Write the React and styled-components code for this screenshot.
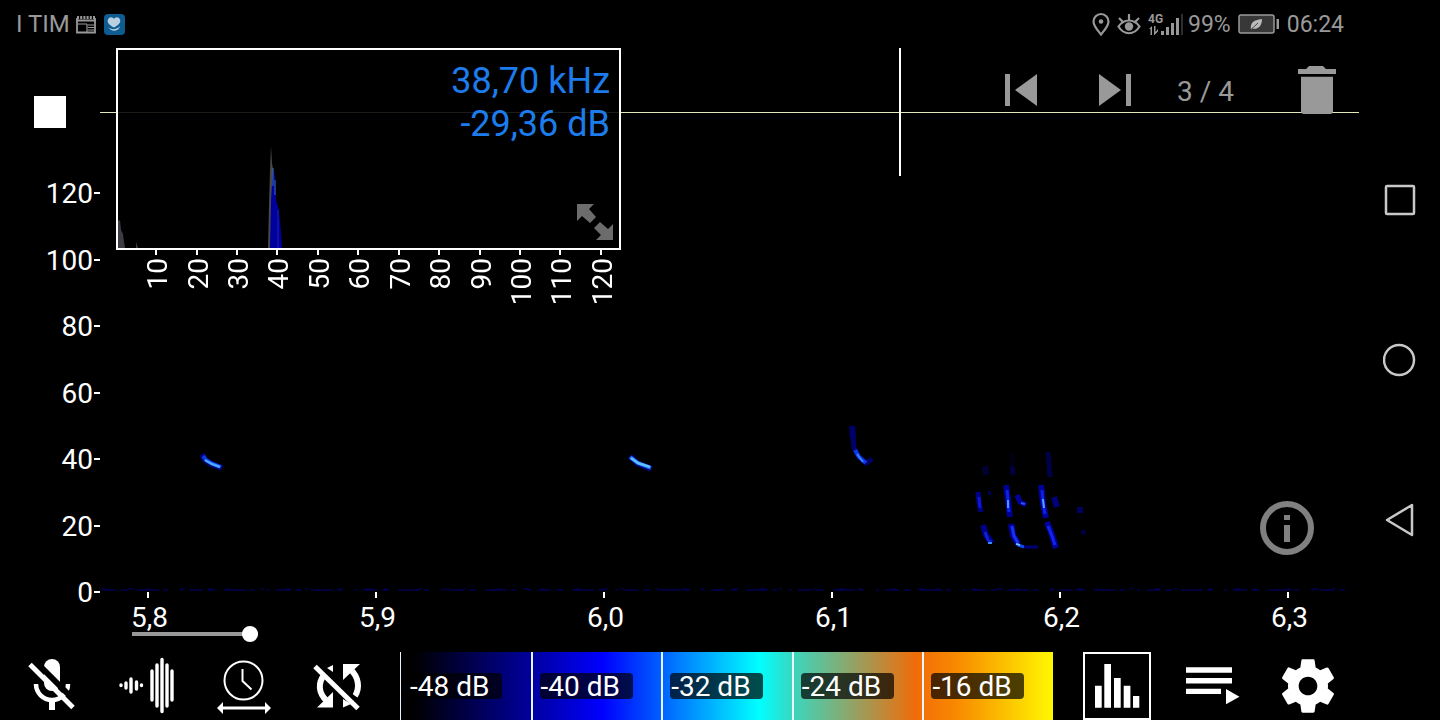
import { useState } from 'react'
import styled, { createGlobalStyle } from 'styled-components'

const frequencies = [120, 100, 80, 60, 40, 20, 0]
const times = ['5,8', '5,9', '6,0', '6,1', '6,2', '6,3']
const spectrumTicks = [10, 20, 30, 40, 50, 60, 70, 80, 90, 100, 110, 120]
const levels = ['-48 dB', '-40 dB', '-32 dB', '-24 dB', '-16 dB']

// every call: path, stroke width, colour
const calls = [
    ['M202 454L205 460L211 464L222 468', 6, '#00006c'],
    ['M203 456L206 460L211 463L221 467', 4, '#0838e0'],
    ['M205 460L212 464L220 467', 2.5, '#48a8ff'],
    ['M630 456L637 463L651 469', 6, '#00006c'],
    ['M630 457L638 463L651 468', 4, '#1060f0'],
    ['M631 458L638 463L650 467', 2.5, '#60c0ff'],
    ['M852 426L853 438', 6, '#00006c'],
    ['M853 438L854 448L859 457L866 463L872 459', 5, '#000068'],
    ['M855 450L859 457L866 463', 4, '#1038e8'],
    ['M857 454L863 462', 2, '#3880ff'],
    ['M978 492L979 502L981 512', 5, '#000088'],
    ['M979 497L980 508', 3, '#0818d0'],
    ['M985 466L986 475', 6, '#000030'],
    ['M988 493L991 493', 4, '#000050'],
    ['M983 525L986 535L992 543', 6, '#000088'],
    ['M985 532L988 540L991 542', 3, '#0820d8'],
    ['M988 543L992 543', 2, '#3888ff'],
    ['M1012 453L1012 466', 3, '#00001c'],
    ['M1012 466L1013 475', 5, '#000040'],
    ['M1006 485L1008 500L1010 517', 6, '#000090'],
    ['M1007 490L1008 500L1009 512', 3, '#0c20e0'],
    ['M1008 500L1008 508', 2, '#4898ff'],
    ['M1017 495L1020 502L1026 505', 5, '#0000a0'],
    ['M1021 503L1025 504', 2, '#2858f0'],
    ['M1011 524L1013 535L1018 544', 6, '#0000a0'],
    ['M1012 526L1014 536L1018 543', 3, '#1430f0'],
    ['M1018 545L1024 547', 3, '#1048f0'],
    ['M1016 544L1020 545', 2, '#78b8ff'],
    ['M1024 547L1038 547', 3, '#000078'],
    ['M1048 452L1049 464L1050 477', 5, '#000048'],
    ['M1041 485L1043 503L1046 518', 6, '#000098'],
    ['M1042 490L1043 503L1045 514', 3, '#0c20e0'],
    ['M1043 499L1044 508', 2, '#58a0ff'],
    ['M1054 497L1057 507', 6, '#000078'],
    ['M1047 522L1052 535L1056 548', 6, '#0000a0'],
    ['M1048 526L1052 536L1055 545', 3, '#1028e8'],
    ['M1080 507L1080 513', 6, '#000060'],
    ['M1083 530L1084 535', 5, '#000038'],
]

const Icon = ({ size = 60, children }) => (
    <svg width={size} height={size} viewBox={`0 0 ${size} ${size}`} fill="currentColor" aria-hidden="true">
        {children}
    </svg>
)

const StatusIcons = () => (
    <StatusGroup $gap={7} $size={23}>
        <svg width="18" height="24" viewBox="0 0 18 24" fill="none" stroke="currentColor" strokeWidth="2.200">
            <path d="M9 22.5C5 17.500 1.500 14 1.500 9.500a7.500 7.500 0 0 1 15 0C16.500 14 13 17.500 9 22.500z" />
            <circle cx="9" cy="9.500" r="2.300" fill="currentColor" stroke="none" />
        </svg>
        <svg width="24" height="24" viewBox="0 0 24 24" fill="none" stroke="currentColor" strokeWidth="2.200">
            <path d="M1.500 14.500C7 6.500 17 6.500 22.500 14.500C17 23.500 7 23.500 1.500 14.500zM12 8V2M5.500 9.500L2 6M18.500 9.500L22 6" />
            <circle cx="12" cy="14.500" r="4.200" fill="currentColor" stroke="none" />
        </svg>
        <StatusGroup $gap={4} $size={23}>
            <svg width="36" height="24" viewBox="0 0 36 24" fill="currentColor">
                <text x="0" y="11" fontSize="12" fontWeight="700">4G</text>
                <path d="M1 17L4 14v9H2.500v-6zM6 14h1.500v6L10 17v2.500L6.500 23H6z" />
                <path d="M13 19h3v4h-3zM18 15h3v8h-3zM23 11h3v12h-3zM28 6h3v17h-3z" />
                <path d="M33 2h2v21h-2z" opacity="0.300" />
            </svg>
            <span>99%</span>
        </StatusGroup>
        <svg width="42" height="22" viewBox="0 0 42 22">
            <rect x="1" y="2" width="35" height="18" rx="2" fill="#383838" stroke="currentColor" strokeWidth="1.500" />
            <path d="M38.500 6h2.500v10h-2.500z" fill="currentColor" />
            <path d="M13 17C12 10 15 7 24 6C24 13 20 17 14 15.500z" fill="#bbb" />
            <path d="M13 16.500L20 10" stroke="#444" />
        </svg>
        <span>06:24</span>
    </StatusGroup>
)

const Spectrogram = () => (
    <Chart viewBox="100 176 1260 416" preserveAspectRatio="none" role="img" aria-label="Spectrogram">
        <defs>
            <filter id="soft" x="-5%" y="-5%" width="110%" height="110%">
                <feGaussianBlur stdDeviation="0.700" />
            </filter>
        </defs>
        <g fill="none" filter="url(#soft)">
            {calls.map(([d, width, color]) => (
                <path key={d + color} d={d} stroke={color} strokeWidth={width} />
            ))}
            <path d="M102 590H1345" stroke="#00003c" strokeWidth="2" strokeDasharray="14 5 7 9 22 4 5 12 3 6" />
            <path d="M102 589H1345" stroke="#00006c" strokeDasharray="4 22 6 13 3 31" />
        </g>
    </Chart>
)

const Spectrum = () => (
    <SpectrumPanel>
        <SpectrumWindow>
            <SpectrumPlot viewBox="0 0 501 198" preserveAspectRatio="none">
                <path d="M0 198V171L2 170L3 180L5 184L6 192L7 198zM18 198V192L20 198z" fill="#3c3c44" />
                <path d="M150 198L151 155L152 120L153 96L154 113L156 125L157 198z" fill="#48484c" />
                <path d="M152 198L153 150L155 118L157 126L158 150L161 160L163 182L164 198z" fill="#00009c" />
                <path d="M155 118V136M157 130V145" stroke="#3474b0" />
                <path d="M160 160V198" stroke="#2020b0" />
            </SpectrumPlot>
            <Readout>
                <span>38,70 kHz</span>
                <span>-29,36 dB</span>
            </Readout>
            <ResizeButton aria-label="Resize spectrum">
                <Icon size={36}>
                    <path d="M0 0h17l-5 5 7 8-6 6-8-7-5 5zM36 36H19l5-5-7-7 6-6 8 7 5-5z" />
                </Icon>
            </ResizeButton>
        </SpectrumWindow>
        <SpectrumAxis>
            {spectrumTicks.map((khz) => (
                <SpectrumTick key={khz}><span>{khz}</span></SpectrumTick>
            ))}
        </SpectrumAxis>
    </SpectrumPanel>
)

const App = () => {
    const [position, setPosition] = useState(100)

    return (
        <Screen>
            <GlobalStyle />
            <Main>
                <StatusBar>
                    <StatusGroup $gap={6} $size={24}>
                        <span>I TIM</span>
                        <svg width="20" height="20" viewBox="0 0 20 20" fill="none" stroke="currentColor">
                            <path d="M1 4V18.500H19V4" strokeWidth="1.800" />
                            <path d="M0 6.500H20" strokeWidth="2" />
                            <path d="M1 3.500H19" strokeWidth="3" strokeDasharray="2 1.200" />
                            <path d="M2 10h9M11 10v8M12 11h6M12 13.500h6M12 16h6" strokeWidth="1.200" />
                        </svg>
                        <AppBadge>
                            <svg width="16" height="16" viewBox="0 0 16 16" fill="#b8d0e0">
                                <path d="M8 11.500C2 8.500 1 6 2 3.500C3.500 0 7 1 8 3C9 1 12.500 0 14 3.500C15 6 13 9 8 11.500z" />
                                <path d="M2 11C5 14 11 14 14 10C13 16 5 16 2 11z" />
                            </svg>
                        </AppBadge>
                    </StatusGroup>
                    <StatusIcons />
                </StatusBar>

                <Workspace>
                    <Gutter>
                        <StopCell>
                            <StopButton aria-label="Stop" />
                        </StopCell>
                        <FrequencyAxis>
                            {frequencies.map((khz) => (
                                <FrequencyLabel key={khz}>{khz}</FrequencyLabel>
                            ))}
                        </FrequencyAxis>
                    </Gutter>

                    <Plot>
                        <Waveform>
                            <Chart viewBox="0 0 1260 128" preserveAspectRatio="none" role="img" aria-label="Waveform">
                                <rect y="64" width="1259" height="1" fill="#e4e8b8" />
                                <rect x="799" width="2" height="128" fill="#fff" />
                            </Chart>
                            <Transport>
                                <PlainButton aria-label="Previous recording">
                                    <Icon size={32}><path d="M0 0h5v32H0zM32 0v32L10 16z" /></Icon>
                                </PlainButton>
                                <PlainButton aria-label="Next recording">
                                    <Icon size={32}><path d="M0 0L22 16L0 32zM27 0h5v32h-5z" /></Icon>
                                </PlainButton>
                                <Counter>3 / 4</Counter>
                                <PlainButton aria-label="Delete recording">
                                    <svg width="38" height="48" viewBox="0 0 38 48" fill="currentColor">
                                        <path d="M0 3h8l3-3h14l3 3h10v5H0zM3 10.700h32V45q0 3-3 3H6q-3 0-3-3z" />
                                    </svg>
                                </PlainButton>
                            </Transport>
                            <Spectrum />
                        </Waveform>

                        <SpectrogramArea>
                            <Spectrogram />
                            <InfoButton aria-label="Info">
                                <Icon size={54}>
                                    <circle cx="27" cy="27" r="24" fill="none" stroke="currentColor" strokeWidth="6" />
                                    <path d="M24 14h6v5h-6zM24 24h6v17h-6z" />
                                </Icon>
                            </InfoButton>
                        </SpectrogramArea>

                        <TimeArea>
                            <TimeAxis>
                                {times.map((time) => (
                                    <TimeLabel key={time}><span>{time}</span></TimeLabel>
                                ))}
                            </TimeAxis>
                            <PositionSlider
                                type="range"
                                aria-label="Position"
                                value={position}
                                onChange={(e) => setPosition(e.target.value)}
                            />
                        </TimeArea>
                    </Plot>
                </Workspace>

                <Toolbar>
                    <ToolButton aria-label="Microphone off">
                        <Icon>
                            <path d="M22 11a8 8 0 0 1 16 0v16a8 8 0 0 1-16 0z" />
                            <path d="M14 28a16 16 0 0 0 32 0" fill="none" stroke="currentColor" strokeWidth="4.500" />
                            <path d="M27 43h6v11h-6z" />
                            <path d="M13 5L55 47" stroke="#000" strokeWidth="6" />
                            <path d="M8 8.500L51 51.500" stroke="currentColor" strokeWidth="5" />
                        </Icon>
                    </ToolButton>
                    <ToolButton aria-label="Time expansion">
                        <Icon>
                            <g stroke="currentColor" strokeWidth="3.400" strokeLinecap="round">
                                <path d="M3 29v.5M8 27v5M13 23v13M18.500 26v7M23.500 29v.5" />
                                <path d="M34 15v29M39 9v41M44 3.500v52M49 9v41M54 15v29" />
                            </g>
                        </Icon>
                    </ToolButton>
                    <ToolButton aria-label="Time scale">
                        <Icon>
                            <g fill="none" stroke="currentColor" strokeWidth="2">
                                <circle cx="29.500" cy="24.500" r="19" />
                                <path d="M28.500 13V25L37.500 33.500" />
                                <path d="M7 52H53" strokeWidth="3" />
                            </g>
                            <path d="M3 52l6-6v12zM57 52l-6-6v12z" />
                        </Icon>
                    </ToolButton>
                    <ToolButton aria-label="Auto scroll off">
                        <Icon>
                            <path d="M14 19C8 27 8 37 17 45M40 13C49 21 50 32 45 40" fill="none" stroke="currentColor" strokeWidth="6" />
                            <path d="M7 51.500H23V36zM33 8H50L33 24zM17 12L23 9V16zM33 43V51.500L41 48z" />
                            <path d="M8 6L53 50" stroke="#000" strokeWidth="3" />
                            <path d="M5 10.500L48 52.500" stroke="currentColor" strokeWidth="5" />
                        </Icon>
                    </ToolButton>

                    <ColorScale>
                        {levels.map((level) => (
                            <ScaleStep key={level}><ScaleLabel>{level}</ScaleLabel></ScaleStep>
                        ))}
                    </ColorScale>

                    <SpectrumToggle aria-label="Show spectrum" aria-pressed="true">
                        <Icon size={48}>
                            <path d="M2 23.700h6.700v22H2zM11.300 2h6.700v43.700h-6.700zM21 16h6.700v29.700H21zM30.700 23.700h6.700v22h-6.700zM40 34h6.300v11.700H40z" />
                        </Icon>
                    </SpectrumToggle>
                    <ToolButton aria-label="Recordings">
                        <Icon>
                            <path d="M4 11.300h46v5.400H4zM4 22h46v5.400H4zM4 32.700h35v5.300H4zM44 33l13.500 7.700L44 48.300z" />
                        </Icon>
                    </ToolButton>
                    <ToolButton aria-label="Settings">
                        <svg width="64" height="64" viewBox="0 0 24 24" fill="currentColor">
                            <path d="M19.430 12.980c.04-.32.07-.64.07-.98s-.03-.66-.07-.98l2.110-1.650c.19-.15.24-.42.12-.64l-2-3.460c-.12-.22-.39-.3-.61-.22l-2.490 1c-.52-.4-1.080-.73-1.690-.98l-.38-2.650C14.460 2.180 14.250 2 14 2h-4c-.25 0-.46.18-.49.42l-.38 2.650c-.61.25-1.170.59-1.690.98l-2.490-1c-.23-.09-.49 0-.61.22l-2 3.460c-.13.22-.07.49.12.64l2.110 1.650c-.04.32-.07.65-.07.98s.03.66.07.98l-2.110 1.650c-.19.15-.24.42-.12.64l2 3.460c.12.22.39.3.61.22l2.490-1c.52.4 1.080.73 1.690.98l.38 2.650c.03.24.24.42.49.42h4c.25 0 .46-.18.49-.42l.38-2.650c.61-.25 1.170-.59 1.690-.98l2.490 1c.23.09.49 0 .61-.22l2-3.460c.12-.22.07-.49-.12-.64l-2.110-1.650zM12 15.500c-1.930 0-3.500-1.570-3.500-3.500s1.570-3.500 3.500-3.500 3.500 1.570 3.500 3.500-1.570 3.500-3.500 3.500z" />
                        </svg>
                    </ToolButton>
                </Toolbar>
            </Main>

            <SystemNav>
                <PlainButton aria-label="Recent apps">
                    <Icon size={34}><rect x="3" y="3" width="28" height="28" rx="1" fill="none" stroke="currentColor" strokeWidth="2.500" /></Icon>
                </PlainButton>
                <PlainButton aria-label="Home">
                    <Icon size={34}><circle cx="16" cy="17" r="15" fill="none" stroke="currentColor" strokeWidth="2.500" /></Icon>
                </PlainButton>
                <PlainButton aria-label="Back">
                    <Icon size={34}><path d="M4 17L29 2V32z" fill="none" stroke="currentColor" strokeWidth="2.500" strokeLinejoin="round" /></Icon>
                </PlainButton>
            </SystemNav>
        </Screen>
    )
}

export default App;

const GlobalStyle = createGlobalStyle`
    * {
        box-sizing: border-box;
    }

    body {
        margin: 0;
        background: #000;
        color: #fff;
        font-family: Roboto, sans-serif;
        font-size: 28px;
    }

    svg {
        display: block;
    }
`

const Screen = styled.div`
    display: grid;
    grid-template-columns: 1fr 80px;
    min-height: 100vh;
`

const Main = styled.main`
    display: flex;
    flex-direction: column;
    min-width: 0;
`

const StatusBar = styled.header`
    display: flex;
    justify-content: space-between;
    align-items: center;
    height: 48px;
    padding: 0 16px;
    color: #999;
`

const StatusGroup = styled.div`
    display: flex;
    align-items: center;
    gap: ${({ $gap }) => $gap}px;
    font-size: ${({ $size }) => $size}px;
`

const AppBadge = styled.span`
    display: grid;
    place-items: center;
    width: 21px;
    height: 21px;
    margin-left: 2px;
    border-radius: 4px;
    background: #0f5c92;
`

const Workspace = styled.section`
    display: flex;
    flex: 1;
`

const Gutter = styled.div`
    display: flex;
    flex-direction: column;
    width: 100px;
`

const StopCell = styled.div`
    display: grid;
    place-items: center;
    height: 128px;
`

const StopButton = styled.button`
    width: 32px;
    height: 32px;
    border: none;
    background: #fff;
    cursor: pointer;
`

const FrequencyAxis = styled.div`
    display: flex;
    flex: 1;
    flex-direction: column;
    justify-content: space-between;
    padding-top: 2px;
    margin-bottom: 43px;
`

const FrequencyLabel = styled.div`
    display: flex;
    justify-content: flex-end;
    align-items: center;
    gap: 1px;
    line-height: 32px;

    &::after {
        content: '';
        width: 6px;
        height: 2px;
        margin-bottom: 2px;
        background: #fff;
    }
`

const Plot = styled.div`
    display: flex;
    flex: 1;
    flex-direction: column;
    min-width: 0;
`

const Waveform = styled.div`
    position: relative;
    height: 128px;
    z-index: 1;
`

const Chart = styled.svg`
    width: 100%;
    height: 100%;
`

const SpectrogramArea = styled.div`
    position: relative;
    display: flex;
    flex: 1;
    min-height: 300px;

    ${Chart} {
        height: auto;
    }
`

const PlainButton = styled.button`
    padding: 0;
    border: none;
    background: none;
    color: inherit;
    cursor: pointer;
`

const Transport = styled.div`
    position: absolute;
    top: 0;
    right: 24px;
    display: flex;
    align-items: center;
    gap: 62px;
    height: 84px;
    color: #999;
`

const Counter = styled.span`
    min-width: 59px;
    margin-left: -16px;
    padding-top: 2px;
    white-space: nowrap;
`

const SpectrumPanel = styled.div`
    position: absolute;
    top: 0;
    left: 16px;
    width: 505px;
`

const SpectrumWindow = styled.div`
    position: relative;
    display: flex;
    flex-direction: column;
    justify-content: space-between;
    align-items: flex-end;
    height: 202px;
    padding: 10px 6px 8px;
    border: 2px solid #fff;
    background: rgba(0, 0, 0, 0.88);
`

const SpectrumPlot = styled.svg`
    position: absolute;
    inset: 0;
    width: 100%;
    height: 100%;
`

const Readout = styled.div`
    display: flex;
    flex-direction: column;
    align-items: flex-end;
    padding-right: 3px;
    font-size: 36px;
    line-height: 43px;
    color: #1c7cec;
`

const ResizeButton = styled(PlainButton)`
    position: relative;
    color: #6c6c6c;
`

const SpectrumAxis = styled.div`
    display: flex;
    padding-left: 20px;
`

const SpectrumTick = styled.div`
    display: flex;
    flex: 1;
    flex-direction: column;
    align-items: center;
    gap: 3px;
    line-height: 32px;

    &::before {
        content: '';
        width: 2px;
        height: 5px;
        background: #fff;
    }

    span {
        margin-left: 4px;
        writing-mode: vertical-rl;
        transform: rotate(180deg);
    }
`

const InfoButton = styled(PlainButton)`
    position: absolute;
    right: 46px;
    bottom: 37px;
    color: #808080;
`

const TimeArea = styled.div`
    height: 60px;
`

const TimeAxis = styled.div`
    display: flex;
    justify-content: space-between;
    padding: 0 34px 0 10px;
`

const TimeLabel = styled.div`
    display: flex;
    flex-direction: column;
    align-items: center;
    gap: 10px;
    width: 76px;
    line-height: 20px;

    &::before {
        content: '';
        width: 2px;
        height: 6px;
        background: #fff;
    }

    span {
        padding-left: 3px;
    }
`

const PositionSlider = styled.input`
    display: block;
    width: 126px;
    height: 16px;
    margin: -2px 0 0 32px;
    appearance: none;
    background: linear-gradient(#999, #999) center / 100% 4px no-repeat;
    cursor: pointer;

    &::-webkit-slider-thumb {
        appearance: none;
        width: 16px;
        height: 16px;
        border-radius: 50%;
        background: #fff;
    }
`

const Toolbar = styled.footer`
    display: flex;
    align-items: center;
    height: 68px;
    padding: 0 4px;
`

const ToolButton = styled(PlainButton)`
    display: grid;
    place-items: center;
    width: 96px;
    height: 68px;
`

const ColorScale = styled.div`
    display: flex;
    flex: 1;
    height: 68px;
    margin: 0 30px 0 12px;
    background: linear-gradient(
        90deg,
        #000 2%,
        #00009c 20%,
        #0000ff 31%,
        #0060ff 40%,
        #00ffff 55%,
        #38d8c0 60%,
        #f06c08 79%,
        #f88800 85%,
        #fff800 100%
    );
`

const ScaleStep = styled.div`
    display: flex;
    flex: 1;
    align-items: center;
    padding-left: 7px;
    border-left: 2px solid #e8f4ff;

    &:first-child {
        padding-left: 8px;
        border-left-width: 1px;
    }
`

const ScaleLabel = styled.span`
    width: 93px;
    height: 26px;
    padding-left: 1px;
    border-radius: 4px;
    background: rgba(0, 0, 0, 0.7);
    line-height: 28px;
    white-space: nowrap;
`

const SpectrumToggle = styled(PlainButton)`
    display: grid;
    place-items: center;
    width: 68px;
    height: 68px;
    margin-right: 13px;
    border: 2px solid #fff;
`

const SystemNav = styled.nav`
    display: flex;
    flex-direction: column;
    justify-content: center;
    align-items: center;
    gap: 126px;
    color: #c8c8c8;
`
